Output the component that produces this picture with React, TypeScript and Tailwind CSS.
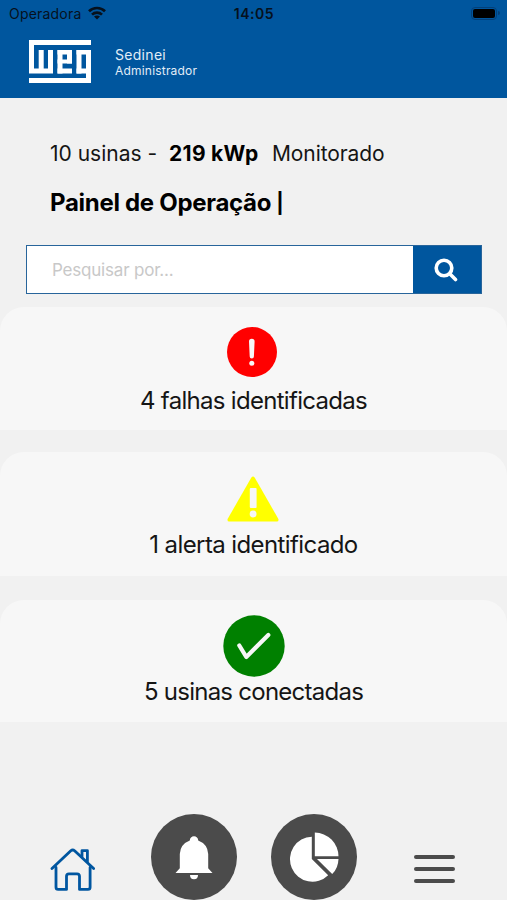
import type { ReactNode } from "react";

function WifiIcon() {
  return (
    <svg width="18" height="14" viewBox="0 0 18 14" fill="none" stroke="#06111d" strokeWidth="2.7">
      <path d="M1 5.2C5.4 0.9 12.6 0.9 17 5.2" />
      <path d="M4 8.6C6.8 5.9 11.2 5.9 14 8.6" />
      <path d="M9 13.6L6 10.6C7.6 9.2 10.4 9.2 12 10.6Z" fill="#06111d" stroke="none" />
    </svg>
  );
}

function Logo() {
  return (
    <svg width="62" height="43" viewBox="0 0 62 43" fill="white" shapeRendering="geometricPrecision">
      <rect x="0" y="0" width="62" height="5" />
      <rect x="0" y="0" width="5" height="33" />
      <rect x="0" y="28.5" width="24" height="5" />
      <rect x="9.7" y="10" width="5" height="23" />
      <rect x="19" y="10" width="5" height="23" />
      <rect x="28.5" y="10" width="5" height="23.5" />
      <rect x="28.5" y="10" width="14.5" height="4.5" />
      <rect x="38" y="10" width="5" height="13.5" />
      <rect x="28.5" y="19.5" width="14.5" height="4" />
      <rect x="28.5" y="28.5" width="14.5" height="5" />
      <rect x="47.5" y="10" width="5" height="23.5" />
      <rect x="47.5" y="10" width="14.5" height="4.5" />
      <rect x="47.5" y="28.5" width="14.5" height="5" />
      <rect x="57" y="10" width="5" height="33" />
      <rect x="0" y="38" width="62" height="5" />
    </svg>
  );
}

function FailureIcon() {
  return (
    <svg width="50" height="50" viewBox="0 0 50 50" className="mr-1">
      <circle cx="25" cy="25" r="25" fill="#ff0000" />
      <path d="M22 14.5a2.8 2.8 0 0 1 5.6 0L26.9 29.5a2.1 2.1 0 0 1-4.2 0Z" fill="#f7f7f7" />
      <circle cx="24.8" cy="36.2" r="2.5" fill="#f7f7f7" />
    </svg>
  );
}

function AlertIcon() {
  return (
    <svg width="52" height="46" viewBox="0 0 52 46" className="mr-px">
      <path d="M24.2 1.8Q26 -0.6 27.8 1.8L51.4 43Q52 45.5 49.8 45.5H2.2Q0 45.5 0.6 43Z" fill="#ffff00" />
      <rect x="22.8" y="12" width="6.8" height="20" rx="1" fill="#f7f7f7" />
      <circle cx="26.1" cy="38" r="3.4" fill="#f7f7f7" />
    </svg>
  );
}

function ConnectedIcon() {
  return (
    <svg width="62" height="62" viewBox="0 0 62 62" fill="none">
      <circle cx="31" cy="31" r="30.7" fill="#008000" />
      <path d="M16.3 30.5L23.3 42L45.3 20" stroke="#f7f7f7" strokeWidth="4.2" strokeLinecap="round" strokeLinejoin="round" />
    </svg>
  );
}

function HomeIcon() {
  return (
    <svg width="46" height="44" viewBox="0 0 46 44" fill="none" stroke="#0056a0" strokeWidth="2.8" strokeLinecap="round" strokeLinejoin="round">
      <path d="M2 20.6L20.8 2.8Q22.7 1.2 24.6 2.8L43.6 20.6" />
      <path d="M6 19.5V39.3Q6 41.4 8.1 41.4H16.5V28.3Q16.5 25.8 19 25.8H27Q29.5 25.8 29.5 28.3V41.4H38Q40.1 41.4 40.1 39.3V19.5" />
      <path d="M32 8.5V2.6H37.4V13.5" />
    </svg>
  );
}

function BellIcon() {
  return (
    <svg width="38" height="44" viewBox="0 0 38 44" fill="white" className="mt-0.5">
      <path d="M14.8 4.5a4.2 4.2 0 0 1 8.4 0Q32.8 8.2 33.2 18V32.2L37.5 37H0.5L4.8 32.2V18Q5.2 8.2 14.8 4.5Z" />
      <path d="M15 39H23a4 4.2 0 0 1-8 0Z" />
    </svg>
  );
}

function ChartIcon() {
  return (
    <svg width="50" height="50" viewBox="0 0 50 50" fill="white">
      <path d="M22.8 4.7V27L39.2 43.3A22.5 22.5 0 1 1 22.8 4.7Z" />
      <path d="M25.8 0.5A24 24 0 0 1 49.5 24.3H25.8Z" />
      <path d="M28 27H49.5Q49.2 36.3 43.2 42.1Z" />
    </svg>
  );
}

type StatusCardProps = {
  label: string;
  icon: ReactNode;
  className: string;
  labelClassName: string;
};

function StatusCard({ label, icon, className, labelClassName }: StatusCardProps) {
  return (
    <section className={`flex flex-col items-center rounded-t-[24px] bg-[#f7f7f7] ${className}`}>
      {icon}
      <p className={`whitespace-nowrap text-[24px] leading-[30px] ${labelClassName}`}>{label}</p>
    </section>
  );
}

export default function App() {
  return (
    <div className="flex h-[900px] w-[507px] flex-col overflow-hidden bg-[#f1f1f1] font-['Inter',sans-serif] text-[#151515]">
      <header className="h-[98px] shrink-0 bg-[#00569e]">
        <div className="grid h-[26px] grid-cols-3 items-center pl-[9px] pr-[7px] text-[#06111d]">
          <div className="flex items-center gap-[7px]">
            <span className="text-[14px] tracking-[0.2px]">Operadora</span>
            <WifiIcon />
          </div>
          <span className="pr-px text-center text-[14px] font-semibold tracking-[0.5px]">14:05</span>
          <div className="flex items-center justify-end">
            <div className="h-[13px] w-[26px] rounded-[4px] border border-[#034079] p-px">
              <div className="h-full rounded-[2px] bg-black" />
            </div>
            <div className="ml-px h-1 w-[2px] rounded-r bg-[#034079]" />
          </div>
        </div>
        <div className="flex pl-[29px] pt-3.5">
          <Logo />
          <div className="ml-6 pt-1.5 text-[#e2edf7]">
            <p className="text-[14px] leading-[18px] tracking-[0.3px]">Sedinei</p>
            <p className="text-[12px] leading-[14px] tracking-[0.2px]">Administrador</p>
          </div>
        </div>
      </header>

      <main>
        <div className="h-[147px] pl-[50px] pt-[41px]">
          <p className="flex whitespace-nowrap text-[21px] leading-[30px]">
            <span className="w-[107px]">10 usinas -</span>
            <strong className="ml-3 w-[91px] font-bold tracking-[0.3px] text-black">219 kWp</strong>
            <span className="ml-3 tracking-[-0.1px]">Monitorado</span>
          </p>
          <h1 className="mt-[19px] flex text-[24px] font-bold leading-[30px] tracking-[-0.3px] text-black">
            Painel de Operação
            <span className="ml-[5px] text-[20px]">|</span>
          </h1>
        </div>

        <form className="mx-[26px] flex h-[49px] w-[456px] border border-[#28659b]">
          <input
            className="min-w-0 flex-1 bg-white pl-[25px] pt-0.5 text-[17px] tracking-[-0.2px] outline-none placeholder:text-[#c8c8c8]"
            placeholder="Pesquisar por..."
          />
          <button type="button" aria-label="Pesquisar" className="flex w-[68px] items-center justify-center bg-[#00569e] pr-0.5 pt-px">
            <svg width="24" height="24" viewBox="0 0 24 24" fill="none" stroke="white" strokeWidth="3.6" strokeLinecap="round">
              <circle cx="10" cy="10" r="7.8" />
              <path d="M16 16L21.5 21.5" />
            </svg>
          </button>
        </form>

        <div className="pt-[13px]">
          <StatusCard
            label="4 falhas identificadas"
            icon={<FailureIcon />}
            className="h-[123px] pt-5"
            labelClassName="mt-[9px] tracking-[-0.7px]"
          />
          <StatusCard
            label="1 alerta identificado"
            icon={<AlertIcon />}
            className="mt-[22px] h-[124px] pt-6"
            labelClassName="mt-2 tracking-[-0.6px]"
          />
          <StatusCard
            label="5 usinas conectadas"
            icon={<ConnectedIcon />}
            className="mt-6 h-[122px] pt-[15px]"
            labelClassName="tracking-[-0.75px]"
          />
        </div>
      </main>

      <nav className="mt-auto flex h-[86px] items-start pl-[50px]">
        <a className="mt-[34px]" aria-label="Início">
          <HomeIcon />
        </a>
        <a className="ml-[55px] flex size-[86px] items-center justify-center rounded-full bg-[#4b4b4b]" aria-label="Alertas">
          <BellIcon />
        </a>
        <a className="ml-[34px] flex size-[86px] items-center justify-center rounded-full bg-[#4b4b4b]" aria-label="Gráficos">
          <ChartIcon />
        </a>
        <a className="ml-[57px] mt-[41px] flex flex-col gap-2" aria-label="Menu">
          <span className="h-1 w-[41px] rounded-full bg-[#4b4b4b]" />
          <span className="h-1 w-[41px] rounded-full bg-[#4b4b4b]" />
          <span className="h-1 w-[41px] rounded-full bg-[#4b4b4b]" />
        </a>
      </nav>
    </div>
  );
}
